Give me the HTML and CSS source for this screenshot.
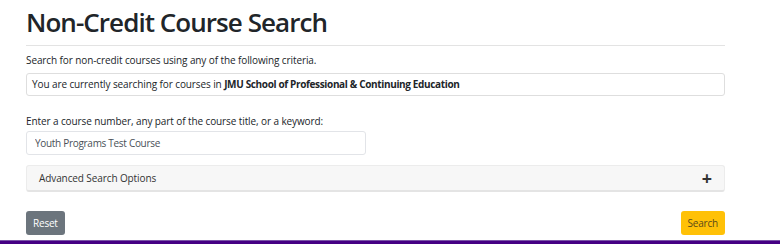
FILE: index.html
```html
<!DOCTYPE html>
<html lang="en">
<head>
    <meta charset="UTF-8">
    <title>Non-Credit Course Search</title>
    <link rel="stylesheet" href="styles.css">
</head>
<body>
    <div class="page">
        <h1>Non-Credit Course Search</h1>
        <p class="intro">Search for non-credit courses using any of the following criteria.</p>
        <div class="current">You are currently searching for courses in <strong>JMU School of Professional &amp; Continuing Education</strong></div>
        <label class="keyword-label" for="keyword">Enter a course number, any part of the course title, or a keyword:</label>
        <input type="text" id="keyword" class="keyword" value="Youth Programs Test Course">
        <div class="advanced">
            <span>Advanced Search Options</span>
            <span class="plus">+</span>
        </div>
        <div class="actions">
            <button class="btn btn-reset">Reset</button>
            <button class="btn btn-search">Search</button>
        </div>
    </div>
    <div class="footer-bar"></div>
</body>
</html>
```

FILE: styles.css
```css
html, body {
    margin: 0;
    padding: 0;
    height: 100%;
    overflow: hidden;
}
body {
    background: #fff;
    font-family: 'Open Sans', 'Noto Sans', Arial, sans-serif;
    font-size: 10px;
    color: #212529;
    position: relative;
}
.page {
    width: 699px;
    padding-left: 26px;
    display: flex;
    flex-direction: column;
}
h1 {
    margin: 6px 0 0 0;
    font-size: 26px;
    font-weight: 600;
    line-height: 33px;
    letter-spacing: -0.95px;
    color: #212529;
    padding-bottom: 6px;
    border-bottom: 1px solid #e3e3e3;
}
.intro {
    margin: 7px 0 0 0;
    line-height: 14px;
    letter-spacing: -0.1px;
}
.current {
    margin-top: 6px;
    height: 21px;
    line-height: 21px;
    padding: 0 5px;
    border: 1px solid #dedede;
    border-radius: 3px;
    color: #212529;
    letter-spacing: -0.1px;
}
.current strong {
    font-weight: 700;
    letter-spacing: -0.35px;
}
.keyword-label {
    margin-top: 18px;
    line-height: 14px;
    letter-spacing: -0.1px;
}
.keyword {
    margin-top: 3px;
    width: 340px;
    height: 24px;
    box-sizing: border-box;
    padding: 0 8px;
    border: 1px solid #e2e4e8;
    border-radius: 3px;
    font-family: inherit;
    font-size: 10px;
    letter-spacing: -0.3px;
    color: #495057;
    outline: none;
}
.advanced {
    margin-top: 10px;
    height: 27px;
    box-sizing: border-box;
    padding: 0 12px 0 12px;
    display: flex;
    justify-content: space-between;
    align-items: center;
    background: #f7f7f7;
    border: 1px solid #ececec;
    border-bottom: 2px solid #e4e4e4;
    border-radius: 3px;
    color: #333;
    letter-spacing: -0.1px;
}
.plus {
    font-size: 18px;
    font-weight: 700;
    color: #333;
    line-height: 1;
}
.actions {
    margin-top: 19px;
    display: flex;
    justify-content: space-between;
}
.btn {
    height: 24px;
    border: none;
    border-radius: 3px;
    font-family: inherit;
    font-size: 10px;
    padding: 0 7px;
    letter-spacing: -0.2px;
    cursor: pointer;
}
.btn-reset {
    background: #6c757d;
    color: #fff;
}
.btn-search {
    background: #ffc107;
    color: #5a4a1a;
}
.footer-bar {
    position: absolute;
    left: 0;
    right: 0;
    bottom: 0;
    height: 3px;
    background: #450084;
    border-top: 1px solid #7a55a8;
}
```
